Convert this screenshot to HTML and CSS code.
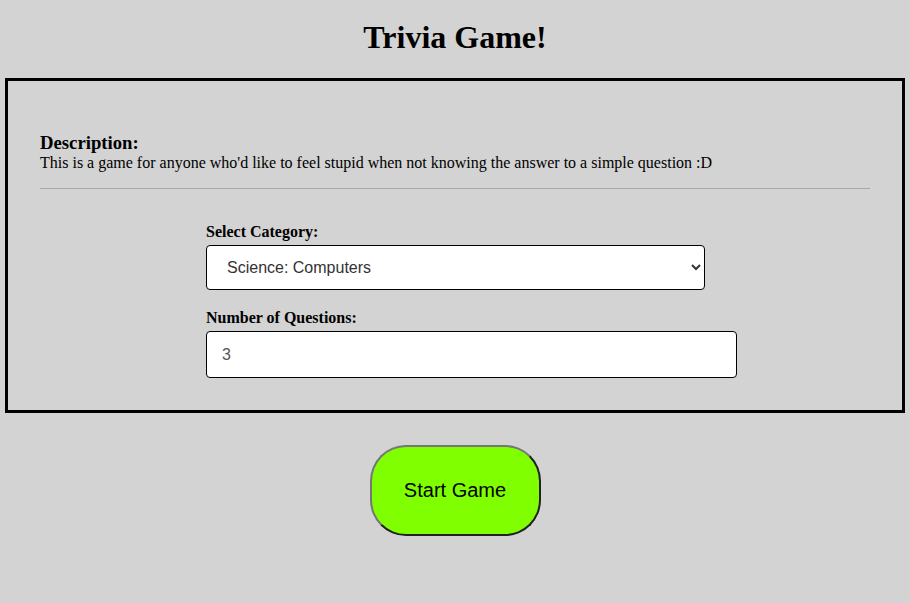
FILE: index.html
```html
<!DOCTYPE html>
<html>
<head>
<meta charset="utf-8">
<link rel="stylesheet" href="styles.css">
</head>
<body>
<h1 class="title">Trivia Game!</h1>
<div class="panel">
  <h3 class="desc-title">Description:</h3>
  <p class="desc-text">This is a game for anyone who'd like to feel stupid when not knowing the answer to a simple question :D</p>
  <hr class="divider">
  <div class="form">
    <label class="label" for="cat">Select Category:</label>
    <select class="select" id="cat">
      <option>Science: Computers</option>
    </select>
    <label class="label label-second" for="num">Number of Questions:</label>
    <input class="input" id="num" type="text" value="3">
  </div>
</div>
<div class="actions">
  <button class="start">Start Game</button>
</div>
</body>
</html>
```
FILE: styles.css
```css
html, body {
  margin: 0;
  background: #d3d3d3;
  font-family: "Liberation Serif", "Times New Roman", serif;
  color: #000;
}
.title {
  font-size: 32px;
  font-weight: bold;
  text-align: center;
  margin: 19px 0 22px;
  line-height: 37px;
}
.panel {
  margin: 0 5px;
  border: 3px solid #000;
  padding: 32px;
}
.desc-title {
  font-size: 18.72px;
  margin: 19px 0 0;
  line-height: 21px;
}
.desc-text {
  font-size: 16px;
  margin: 0;
  line-height: 19px;
}
.divider {
  margin: 16px 0 0;
  border: 0;
  border-top: 1px solid #a9a9a9;
  height: 0;
}
.form {
  width: 531px;
  margin: 34px 0 0 166px;
  display: flex;
  flex-direction: column;
  align-items: flex-start;
}
.label {
  font-weight: bold;
  font-size: 16px;
  line-height: 18px;
  margin-bottom: 4px;
}
.label-second {
  margin-top: 19px;
}
.select {
  height: 45px;
  width: 499px;
  box-sizing: border-box;
  border: 1px solid #000;
  border-radius: 4px;
  background: #fff;
  font-family: "Liberation Sans", Arial, sans-serif;
  font-size: 16px;
  color: #333;
  padding: 0 16px;
}
.input {
  width: 531px;
  box-sizing: border-box;
  height: 47px;
  border: 1px solid #000;
  border-radius: 4px;
  background: #fff;
  font-family: "Liberation Sans", Arial, sans-serif;
  font-size: 16px;
  color: #555;
  padding: 0 15px;
}
.actions {
  display: flex;
  justify-content: center;
  margin-top: 32px;
}
.start {
  width: 171px;
  height: 91px;
  background: #7fff00;
  border: 2px outset #767676;
  border-radius: 36px;
  font-family: "Liberation Sans", Arial, sans-serif;
  font-size: 20px;
  color: #000;
}
```
